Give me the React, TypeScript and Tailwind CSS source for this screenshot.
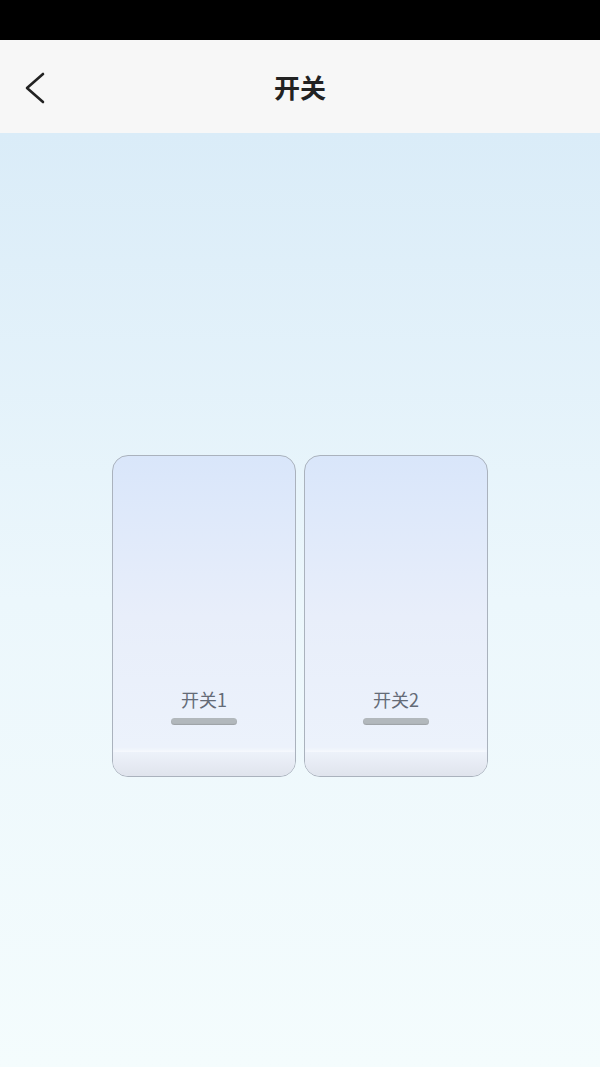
function SwitchCard({ label }: { label: string }) {
  return (
    <div className="w-[184px] h-[322px] rounded-[16px] border border-[#aab2bd] bg-gradient-to-b from-[#d9e6fa] via-[#e8eefa] to-[#edf3fc] overflow-hidden flex flex-col">
      <div className="flex-1 flex flex-col items-center justify-end pb-[27px]">
        <span className="text-[18px] leading-none text-[#646b77]">{label}</span>
        <div className="mt-[10px] w-[66px] h-[7px] rounded-full bg-[#b2b8bc] shadow-[inset_0_-1px_1px_rgba(0,0,0,0.12)]" />
      </div>
      <div className="h-[24px] bg-gradient-to-b from-[#edf2fa] to-[#e0e4ed] shadow-[0_-2px_4px_rgba(255,255,255,0.6)]" />
    </div>
  );
}

export default function App() {
  return (
    <div
      className="w-[600px] h-[1067px] flex flex-col overflow-hidden"
      style={{ fontFamily: '"Noto Sans CJK SC", "Noto Sans", sans-serif' }}
    >
      <div className="h-[40px] bg-black shrink-0" />
      <div className="h-[93px] bg-[#f7f7f7] shrink-0 flex items-center relative">
        <svg className="absolute left-[22px] top-[31px]" width="26" height="34" viewBox="0 0 26 34" fill="none">
          <polyline points="21,3 5,17 21,31" stroke="#222" strokeWidth="2.6" strokeLinecap="round" strokeLinejoin="round" />
        </svg>
        <h1 className="w-full text-center text-[26px] font-bold text-[#222]">开关</h1>
      </div>
      <div className="flex-1 bg-gradient-to-b from-[#daecf8] via-[#ecf7fc] to-[#f4fcfd] flex justify-center pt-[322px]">
        <div className="flex gap-[8px] h-fit">
          <SwitchCard label="开关1" />
          <SwitchCard label="开关2" />
        </div>
      </div>
    </div>
  );
}
